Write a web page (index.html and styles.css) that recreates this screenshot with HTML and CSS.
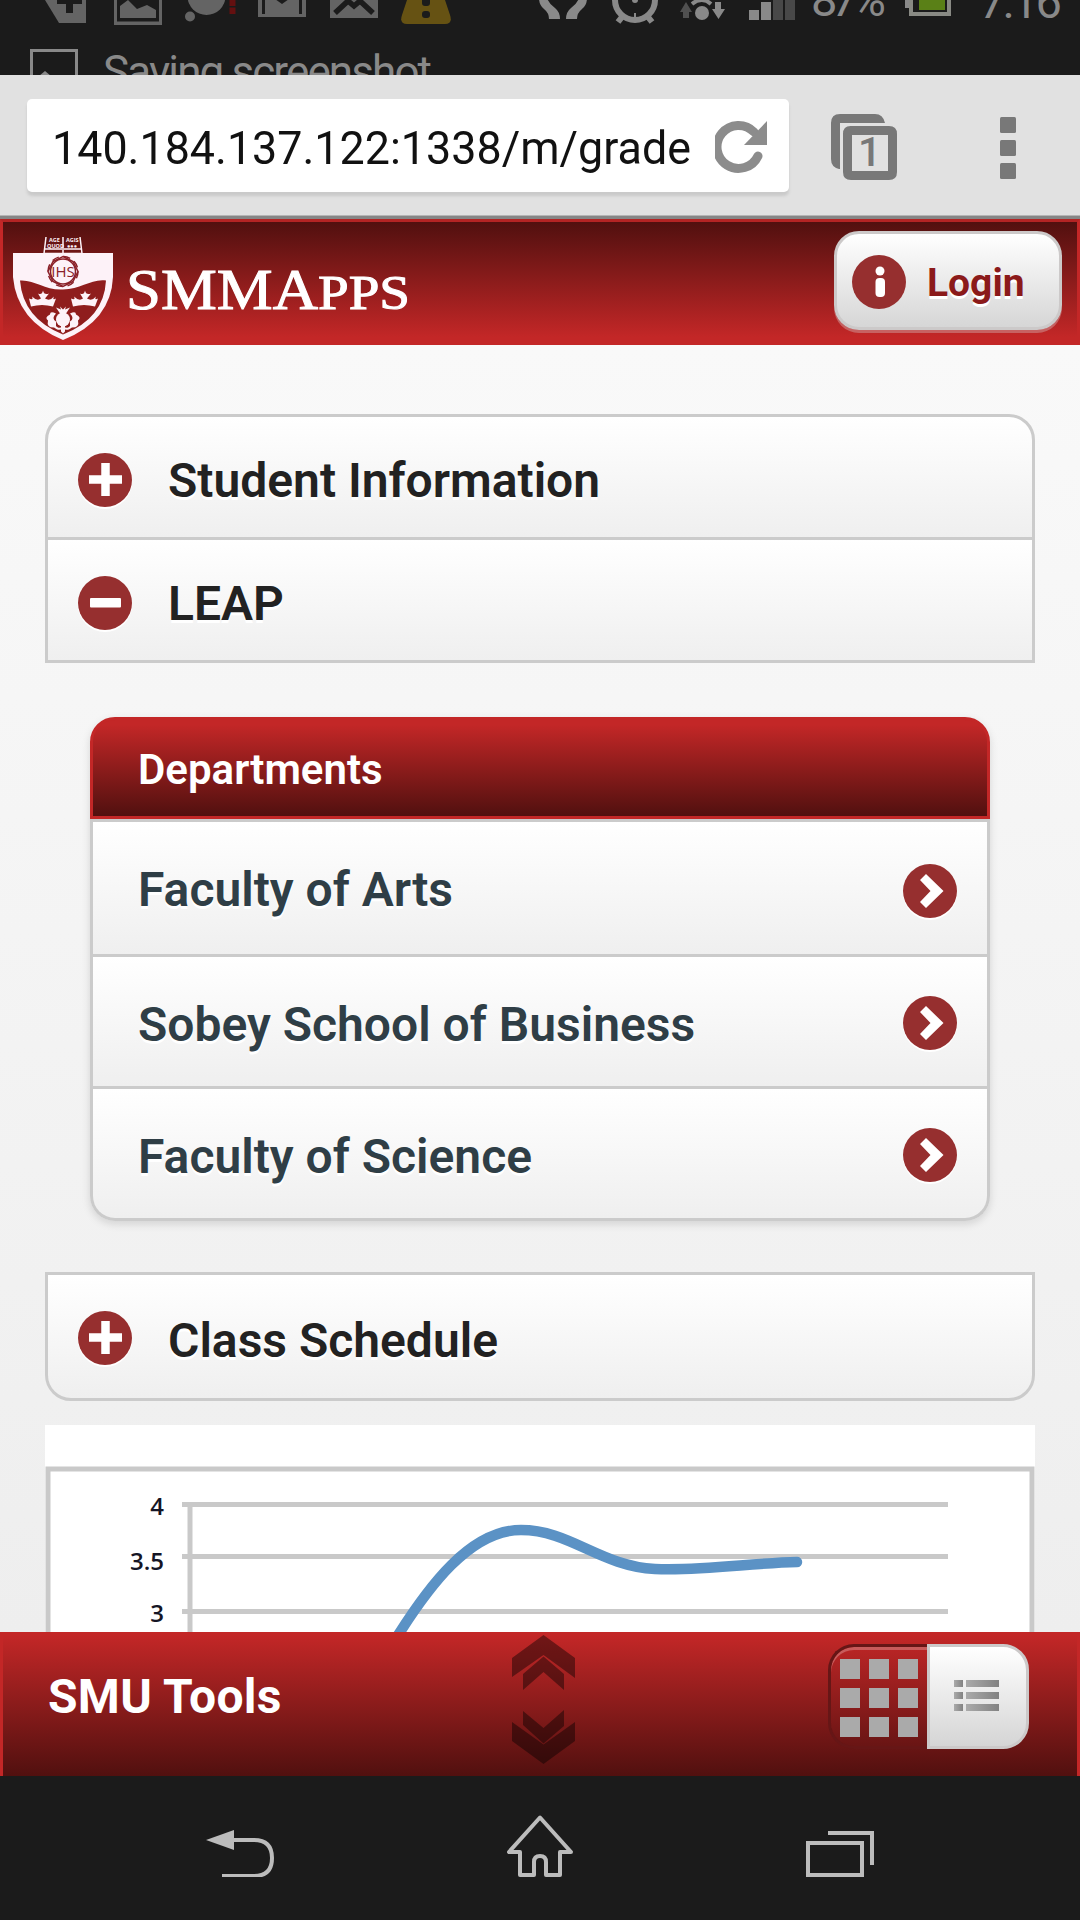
FILE: index.html
```html
<!DOCTYPE html>
<html lang="en">
<head>
<meta charset="utf-8">
<title>SMMApps</title>
<link rel="stylesheet" href="styles.css">
</head>
<body>
<svg class="defs" width="0" height="0" aria-hidden="true">
  <symbol id="plus" viewBox="0 0 54 54"><circle cx="27" cy="27" r="27" fill="#962f2f"/><path d="M27.500 10V43M11 26.500H44" stroke="#fff" stroke-width="8.500"/></symbol>
  <symbol id="minus" viewBox="0 0 54 54"><circle cx="27" cy="27" r="27" fill="#962f2f"/><rect x="12" y="22" width="31" height="9.500" rx="1" fill="#fff"/></symbol>
  <symbol id="arrow" viewBox="0 0 54 54"><circle cx="27" cy="27" r="27" fill="#962f2f"/><path d="M17 16l6-6 17.500 17L23 44l-6-6 10.500-11z" fill="#fff"/></symbol>
</svg>

<svg class="status" viewBox="0 0 1080 75">
  <g fill="#646464">
    <path d="M45 0H86V23H59Z"/>
    <path d="M114 -5H162V25H114Z"/><path d="M117 -5H159V21.500H117Z" fill="#1b1b1b"/><path d="M120 18V6L128 0 137 9 147 5 156 10V18Z"/>
    <circle cx="206.500" cy="-4" r="19"/><circle cx="190" cy="16.500" r="5"/>
    <path d="M258 -5H306V17H258Z"/><path d="M330 -5H378V18H330Z"/>
  </g>
  <path d="M66 -5h7V0h9V4h-9V13h-7V4h-9V0h9Z" fill="#1b1b1b"/>
  <path d="M229.500 -2h6V6h-6zM229.500 7.500h6V14h-6z" fill="#641010"/>
  <path d="M263.500 -2V14M300.500 -2V14" stroke="#1b1b1b" stroke-width="3"/><path d="M275 -1H289L282 4Z" fill="#1b1b1b"/>
  <path d="M335 13L348 1L354 6L360 1L373 13" stroke="#1b1b1b" stroke-width="5.500" fill="none"/>
  <path d="M409 -6H443L450 15Q453 24 445 24H407Q399 24 402 15Z" fill="#665213"/>
  <rect x="422" y="-4" width="8" height="10" rx="3" fill="#1b1b1b"/><rect x="422" y="11" width="8" height="7" rx="3" fill="#1b1b1b"/>
  <g fill="#898989">
    <path d="M539 -2H547Q549 4 555 8Q560 12 560 19H549Q549 13 544 9Q539 5 539 -2ZM587 -2H579Q577 4 571 8Q566 12 566 19H577Q577 13 582 9Q587 5 587 -2Z"/>
    <circle cx="635" cy="0" r="20" fill="none" stroke="#898989" stroke-width="6"/>
    <path d="M622 17l-4 5M648 17l4 5" stroke="#898989" stroke-width="6"/><circle cx="635" cy="0" r="3"/><path d="M635 13V19" stroke="#898989" stroke-width="2"/>
    <path d="M692 4Q702 -4 711 4" fill="none" stroke="#898989" stroke-width="4"/><circle cx="702" cy="13" r="7"/>
    <path d="M680 12l6-10 6 10h-3v6h-6v-6z" fill="#505050"/><path d="M715 2h6V9h4l-6.500 10L712 9h3z"/>
    <path d="M749 10h10V20h-10zM761 2h10V20h-10z"/><path d="M773 -2h10V20h-10zM785 -2h10V20h-10z" fill="#484848"/>
    <path d="M905 0h5V8h-5z"/>
    <path d="M911 -3V14H949V-3" fill="none" stroke="#898a84" stroke-width="4"/><path d="M919 -2H945V10H919Z" fill="#5a8017"/>
    <text class="status-num" x="811" y="16" textLength="75">87%</text>
    <text class="status-num" x="979" y="18" textLength="83">7:16</text>
    <text class="status-msg" x="103" y="87" textLength="329">Saving screenshot</text>
  </g>
  <rect x="31.500" y="50.500" width="45" height="45" fill="none" stroke="#898989" stroke-width="3"/><path d="M39 76L45 71L51 76Z" fill="#898989"/>
</svg>

<div class="browser">
  <div class="url"><span class="url-text">140.184.137.122:1338/m/grade</span>
    <svg class="reload" viewBox="0 0 54 54"><path d="M43 36A21.500 21.500 0 1 1 39 12" fill="none" stroke="#8c8c8c" stroke-width="9" stroke-linecap="round"/><path d="M52 1V25H29Z" fill="#8c8c8c"/></svg>
  </div>
  <svg class="tabs" viewBox="0 0 68 68"><path d="M9 56Q1 54 1 46V10Q1 1 10 1H45Q53 1 55 10H10V56Z" fill="#787878"/><path d="M20.500 13H59Q67 13 67 21V59Q67 67 59 67H21Q13 67 13 59V21Q13 13 20.500 13ZM22 22V58H58V22Z" fill="#787878" fill-rule="evenodd"/><text class="tab-num" x="28" y="53">1</text></svg>
  <svg class="menu" viewBox="0 0 16 62"><g fill="#787878"><rect width="16" height="16" rx="1.500"/><rect y="23" width="16" height="16" rx="1.500"/><rect y="46" width="16" height="16" rx="1.500"/></g></svg>
</div>

<header class="header">
  <svg class="logo" viewBox="0 7.500 412 110">
    <g fill="#fdf2f8">
      <path d="M10 31H110V55Q108 99 60 118Q14 99 10 55Z" transform="translate(0 -1.500)"/>
    </g>
    <path d="M17 58C32 57 42 68 60 67C78 67 88 56 103 58Q101 96 60 112Q20 96 17 58Z" fill="#8f1d1d" transform="translate(0 -1)"/>
    <g fill="none" stroke="#8a2028" stroke-width="1.500"><circle cx="60" cy="48" r="12.500"/><circle cx="60" cy="48" r="15" stroke-dasharray="7 4.780"/><path d="M60 33L70 38 75 48 70 58 60 63 50 58 45 48 50 38Z"/></g>
    <text class="ihs" x="60" y="53" text-anchor="middle">IHS</text>
    <g fill="none" stroke="#fdf2f8" stroke-width="1.500"><path d="M43 13.500L41 30H79L77 13.500M60 13.500V30M42 25.500H59M61 25.500H79"/></g>
    <text class="motto" x="46" y="18.500">AGE</text><text class="motto" x="44" y="24">QUOD</text><text class="motto" x="63" y="18.500">AGIS</text><text class="motto" x="64" y="24">●●●</text>
    <g fill="#fdf2f8">
      <path id="crown" d="M28 83L26 75Q31 77 29 73Q34 78 38 75L35 70Q39 72 40 67Q41 72 46 70L42 75Q47 78 51 73Q49 77 53 75L50 83Q39 80 28 83Z"/>
      <use href="#crown" x="42"/>
      <circle cx="60" cy="96" r="7"/><path d="M57 90L53 84L58 86L57 83L60 86L63 83L62 86L67 84L63 90ZM58 102H62V108L60 110L58 108Z"/>
      <path d="M53 104Q43 105 45 97Q41 94 47 91Q47 87 53 90Q48 95 53 98ZM67 104Q77 105 75 97Q79 94 73 91Q73 87 67 90Q72 95 67 98Z"/>
      <path d="M50 100Q54 108 60 104Q66 108 70 100" fill="none" stroke="#fdf2f8" stroke-width="2"/>
    </g>
    <g class="wordmark"><text x="123" y="85.500" font-size="57" textLength="192" lengthAdjust="spacingAndGlyphs">SMMA</text><text x="315" y="85.500" font-size="48" textLength="92" lengthAdjust="spacingAndGlyphs">PPS</text></g>
  </svg>
  <a class="login"><svg viewBox="0 0 54 54"><circle cx="27" cy="27" r="27" fill="#962f2f"/><circle cx="28" cy="16" r="4.500" fill="#fff"/><rect x="23.500" y="23" width="9.500" height="19" rx="4" fill="#fff"/></svg><span>Login</span></a>
</header>

<main class="content">
  <div class="panel panel-top"><svg><use href="#plus"/></svg><span>Student Information</span></div>
  <div class="panel panel-open"><svg><use href="#minus"/></svg><span>LEAP</span></div>
  <div class="list">
    <div class="list-head"><span>Departments</span></div>
    <div class="item item-first"><span>Faculty of Arts</span><svg><use href="#arrow"/></svg></div>
    <div class="item"><span>Sobey School of Business</span><svg><use href="#arrow"/></svg></div>
    <div class="item"><span>Faculty of Science</span><svg><use href="#arrow"/></svg></div>
  </div>
  <div class="panel panel-last"><svg><use href="#plus"/></svg><span>Class Schedule</span></div>
  <svg class="chart" viewBox="45 1425 990 207">
    <path fill="#fff" d="M45 1425H1035V1632H45Z"/>
    <g fill="none" stroke="#c9c9c9" stroke-width="5"><path d="M48 1640V1469H1032V1640"/><path d="M182 1504.500H948M182 1556.500H948M182 1611.500H948M190 1504V1640"/></g>
    <path d="M395 1640C428 1587 470 1530 521 1530C570 1530 600 1566 655 1569C705 1571 750 1563 797 1562" fill="none" stroke="#5b92c5" stroke-width="10.500" stroke-linecap="round"/>
    <g class="axis"><text x="164" y="1515">4</text><text x="164" y="1570">3.5</text><text x="164" y="1622">3</text></g>
  </svg>
</main>

<footer class="footer">
  <span class="t-tools">SMU Tools</span>
  <svg class="chevrons" viewBox="512 1635 63 130"><g fill="#000" fill-opacity=".42"><path d="M543.500 1635L575 1658V1678L543.500 1655L512 1677V1658Z"/><path d="M543.500 1656.500L564 1674V1690L543.500 1672L523 1690V1674Z"/><path d="M523 1711L543.500 1728L564 1710V1726L543.500 1743.500L523 1725Z"/><path d="M512 1722L543.500 1744.500L575 1722V1741L543.500 1764L512 1741Z"/></g></svg>
  <div class="toggle">
    <div class="grid"><i></i><i></i><i></i><i></i><i></i><i></i><i></i><i></i><i></i></div>
    <div class="rows"><i></i><b></b><i></i><b></b><i></i><b></b></div>
  </div>
</footer>

<nav class="nav">
  <svg viewBox="0 0 68 50"><path d="M0 13L28 3V23Z" fill="#bcbcbc"/><path d="M27 13H48C60 13 66 19 66 31S60 49 48 49H16" fill="none" stroke="#bcbcbc" stroke-width="4"/></svg>
  <svg class="home" viewBox="0 0 68 64"><path d="M34 3.500L3 38H14V61H28V48Q28 42 34 42T40 48V61H54V38H65Z" fill="none" stroke="#bcbcbc" stroke-width="4" stroke-linejoin="round"/></svg>
  <svg class="recent" viewBox="0 0 68 46"><path d="M2 12H56V44H2ZM22 2H66V34" fill="none" stroke="#bcbcbc" stroke-width="4"/></svg>
</nav>
</body>
</html>
```
FILE: styles.css
```css
* { box-sizing: border-box; }
body { margin: 0; width: 1080px; height: 1920px; overflow: hidden; display: flex; flex-direction: column; font-family: Roboto, sans-serif; background: #1b1b1b; }
svg { display: block; flex: none; }
span { white-space: nowrap; }
.defs { position: absolute; }

.status { width: 1080px; height: 75px; background: #1b1b1b; }
.status-num { font-size: 47px; font-weight: 400; }
.status-msg { font-size: 44px; }

.browser { height: 144px; background: #e1e1e1; border-bottom: 3px solid #868686; box-shadow: inset 0 -1px #b5b5b5; display: flex; align-items: flex-start; padding: 24px 0 0 27px; }
.url { width: 762px; height: 93px; border-radius: 5px; background: #fff; box-shadow: 0 4px 3px #cacaca; display: flex; align-items: center; padding-left: 25px; }
.url-text { width: 663px; padding-top: 4px; font-size: 46px; transform: scaleX(.975); transform-origin: left; color: #111; }
.reload { width: 54px; height: 54px; margin-top: 3px; }
.tabs { width: 68px; height: 68px; margin: 14px 0 0 41px; }
.tab-num { font-size: 41px; font-weight: 500; fill: #787878; }
.menu { width: 16px; height: 62px; margin: 18px 0 0 102px; }

.header { height: 126px; border: 3px solid #c32727; border-top-color: #b32424; background: linear-gradient(#51100f, #c32727 96%); display: flex; justify-content: space-between; padding: 9px 15px 0 0; }
.logo { width: 412px; height: 110px; overflow: visible; }
.wordmark { fill: #fff; stroke: #fff; stroke-width: 1; font-family: "Liberation Serif", serif; }
.ihs { font: 15px "Open Sans", sans-serif; fill: #8a2028; }
.motto { font: bold 5.5px "Open Sans", sans-serif; fill: #fdf2f8; }
.login { width: 228px; height: 99px; border: 3px solid #ccc9c9; border-radius: 25px; background: linear-gradient(#fff, #d6d6d6); box-shadow: 0 3px rgba(204,130,130,.65); display: flex; align-items: center; gap: 21px; padding-left: 15px; color: #8b1a1a; font-size: 39px; font-weight: bold; text-shadow: 0 3px #fff; }
.login svg { width: 54px; height: 54px; margin-top: 2px; }
.login span { padding-top: 5px; }

.content { height: 1287px; padding: 69px 45px 0; background: linear-gradient(#f9f9f9, #eee); overflow: hidden; }
.panel { height: 126px; border: 3px solid #cbcbcb; background: linear-gradient(#fff, #efefef); display: flex; align-items: center; gap: 36px; padding-left: 30px; color: #222; font-size: 48px; font-weight: 600; text-shadow: 0 3px #fff; }
.panel svg, .item svg { width: 54px; height: 54px; filter: drop-shadow(0 2px 0 #fff); }
.panel span { padding-top: 7px; }
.panel svg { margin-top: 6px; }
.panel-top { border-radius: 26px 26px 0 0; }
.panel-open { margin-top: -3px; }
.panel-last { height: 129px; border-radius: 0 0 26px 26px; }
.panel-last svg { margin-top: 3px; }
.list { width: 900px; margin: 54px 45px 51px; border-radius: 25px; box-shadow: 0 3px 9px rgba(0,0,0,.13); }
.list-head { height: 102px; border: 3px solid #c32727; border-radius: 25px 25px 0 0; background: linear-gradient(#c32727 5%, #51100f); color: #fff; font-size: 42px; font-weight: 600; display: flex; align-items: center; padding: 2px 0 0 45px; }
.item { height: 132px; border: 3px solid #cbcbcb; border-top: 0; background: linear-gradient(#fff, #efefef); display: flex; justify-content: space-between; align-items: center; padding: 3px 30px 0 45px; color: #2f3e46; font-size: 48px; font-weight: 600; text-shadow: 0 3px #fff; }
.item span { padding-top: 2px; }
.item-first { height: 138px; border-top: 3px solid #cbcbcb; padding-top: 6px; }
.item-first span { padding: 0 0 4px; }
.item:last-child { border-radius: 0 0 25px 25px; }
.chart { width: 990px; height: 207px; margin-top: 24px; }
.axis { font: 600 24px "Open Sans", sans-serif; fill: #151525; text-anchor: end; }

.footer { height: 144px; border: 3px solid #c32727; border-bottom: 0; background: linear-gradient(#c32727, #51100f); display: flex; align-items: flex-start; }
.t-tools { width: 464px; margin: 34px 0 0 45px; line-height: 56px; font-size: 48px; letter-spacing: .3px; font-weight: 700; color: #fff; }
.chevrons { width: 63px; height: 130px; }
.toggle { width: 201px; height: 105px; margin: 9px 0 0 253px; display: flex; }
.grid { width: 99px; border: 3px solid #661616; border-right: 0; border-radius: 26px 0 0 26px; box-shadow: inset 0 3px #c85b5b; display: grid; grid-template-columns: repeat(3, 20px); grid-auto-rows: 20px; gap: 9px; padding: 12px 9px; }
.grid i { background: #aaa; }
.rows { width: 102px; border: 3px solid #ccc9c9; border-radius: 0 26px 26px 0; background: linear-gradient(#fff, #d5d5d5); display: grid; grid-template-columns: 9px 33px; grid-auto-rows: 7px; gap: 5px 3px; padding: 33px 0 0 24px; }
.rows i, .rows b { background: linear-gradient(90deg, #aaa, #828282); }

.nav { height: 144px; background: #1b1b1b; display: flex; padding: 51px 0 0 206px; }
.nav svg { width: 68px; height: 50px; }
.nav .home { height: 64px; margin: -13px 0 0 232px; }
.nav .recent { height: 46px; margin: 4px 0 0 232px; }
```
